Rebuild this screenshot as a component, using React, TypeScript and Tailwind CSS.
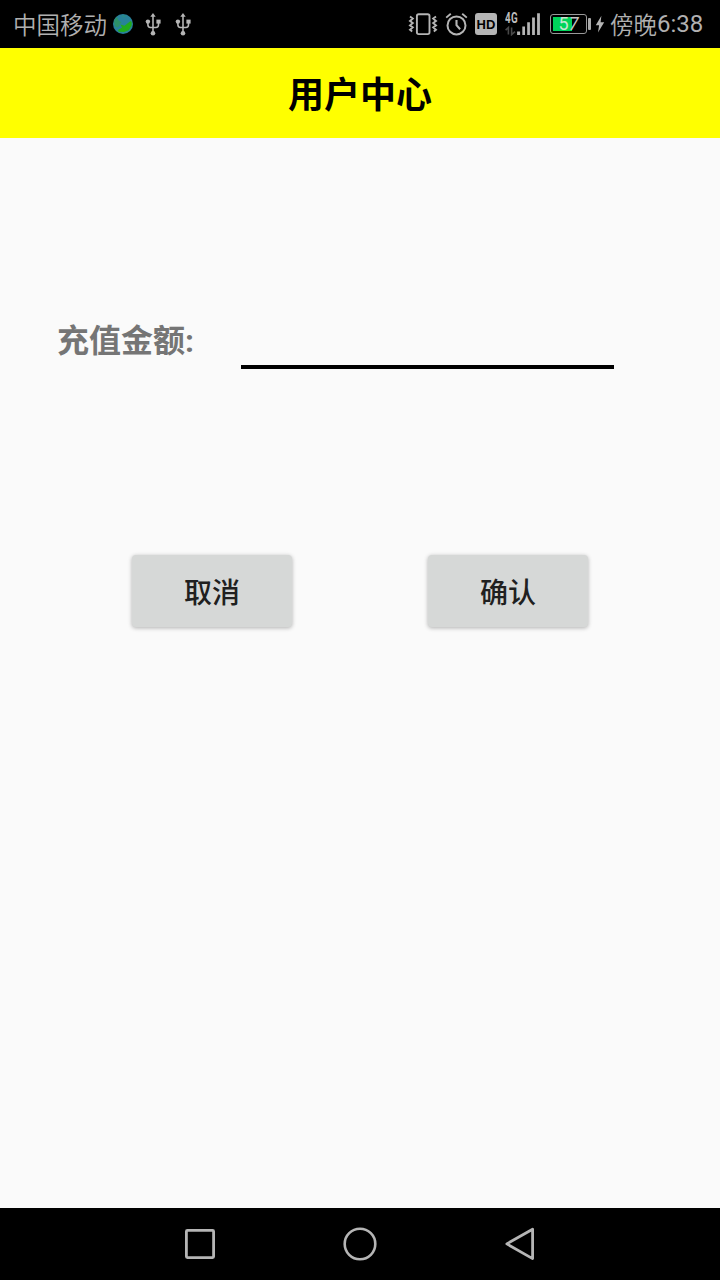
import type { ReactNode } from "react";

const statusFont = "font-['Roboto','Noto_Sans_CJK_SC',sans-serif]";

function Usb() {
  return (
    <svg className="block h-6 w-5 shrink-0" viewBox="0 0 20 24" fill="none" stroke="#b5b5b5" strokeWidth="1.6">
      <path d="M10 4v16M4.9 9.5v3.2c0 1.8 1 2.7 2.6 2.8H10M15.5 10v2.7c0 1.8-1 2.7-2.6 2.8H10" />
      <path d="M10 1L12.7 4.8H7.3z" fill="#b5b5b5" stroke="none" />
      <circle cx="4.9" cy="9.6" r="2.2" fill="#b5b5b5" stroke="none" />
      <rect x="13.4" y="7.6" width="4.2" height="4" fill="#b5b5b5" stroke="none" />
      <circle cx="10" cy="21.2" r="2.3" fill="#b5b5b5" stroke="none" />
    </svg>
  );
}

function Globe() {
  return (
    <svg className="ml-[5px] block h-6 w-[22px] shrink-0" viewBox="0 0 22 24">
      <circle cx="11" cy="12" r="10" fill="#28829a" />
      <path d="M3 7L5 5l1.5 3.2 3 2.4-1.6 1.3-.6 2.2-1.8 1.3L2.8 14.2 2 9z" fill="#2c9168" />
      <path d="M8.4 12.6l4.2 1.2 5.9-4.8 1.2 1-.1 3.7-2.9 4.6-4.6 1.6-5.4-.2-.7-1.8 4.1-2.4z" fill="#22ab1c" />
      <path d="M9.5 3.3l4.8.3-1.2 2-3-.4z" fill="#2b8a88" />
    </svg>
  );
}

function Vibrate() {
  return (
    <svg className="block h-6 w-[30px] shrink-0" viewBox="0 0 30 24" fill="none" stroke="#b5b5b5">
      <rect x="8.9" y="2.3" width="12.6" height="19.8" rx="1.8" strokeWidth="1.9" />
      <path d="M2 4.6l2.8 2-2.8 2.4 2.8 2L2 13.4l2.8 2L2 17.8l2.2 1.8M28 4.6l-2.8 2L28 9l-2.8 2 2.8 2.4-2.8 2 2.8 2.4-2.2 1.8" strokeWidth="1.9" />
    </svg>
  );
}

function Alarm() {
  return (
    <svg className="ml-[7px] block h-6 w-[23px] shrink-0" viewBox="0 0 23 24" fill="none" stroke="#b5b5b5">
      <circle cx="11.5" cy="13.4" r="9" strokeWidth="2" />
      <path d="M11.5 8v5.2l3.6 4" strokeWidth="2.1" />
      <path d="M1.2 5.6l4.6-3.9M21.8 5.6l-4.6-3.9" strokeWidth="1.9" />
    </svg>
  );
}

function HdBadge() {
  return (
    <span className="ml-[7px] flex h-[22px] w-[22px] items-center justify-center rounded-[3px] bg-[#b5b5b5] font-['Liberation_Sans',sans-serif] text-[13px] font-bold leading-none text-black">
      HD
    </span>
  );
}

function Signal() {
  return (
    <div className="relative ml-[8px] h-6 w-9 shrink-0">
      <svg className="block h-6 w-9" viewBox="0 0 36 24">
        <path d="M12.1 19.6h3v3.4h-3zM17.3 14.5h2.7V23h-2.7zM22.2 10.2h2.7V23h-2.7zM27.1 5.6h2.8V23h-2.8zM32.1 1.2h2.8V23h-2.8z" fill="#b5b5b5" />
        <path d="M.6 18.2l2.8-2.6v7M6.6 15.6v7l3.4-3" fill="none" stroke="#484848" strokeWidth="1.6" />
      </svg>
      <span className="absolute left-0 top-0 origin-left scale-x-[.7] text-[14px] font-bold leading-[12px] tracking-[.5px] text-[#bdbdbd]">4G</span>
    </div>
  );
}

function Battery() {
  return (
    <div className="ml-[9px] flex h-6 shrink-0 items-center">
      <div className="relative h-[20px] w-[37px] rounded-[3px] border border-[#999] p-[2px]">
        <div className="h-full w-[19px] bg-[#00d45a]" />
        <span className="absolute inset-0 flex items-center justify-center text-[18px] font-normal leading-none text-[#c8e6d2]">
          <span>5</span>
          <span className="italic text-[#c4c4c4]">7</span>
        </span>
      </div>
      <div className="ml-px h-[12px] w-[3px] rounded-[1px] bg-[#aaa]" />
      <svg className="ml-[4px] block h-[18px] w-[10px]" viewBox="0 0 10 18">
        <path d="M6.4 .8L.8 10.2h3.3L3 17.4 9.2 7.2H5.6z" fill="#b5b5b5" />
      </svg>
    </div>
  );
}

function StatusBar() {
  return (
    <header className={`flex h-12 shrink-0 items-center justify-between bg-black pl-[13px] pr-4 text-[23.5px] font-[350] leading-6 text-[#b0b0b0] ${statusFont}`}>
      <div className="flex items-center">
        <span className="w-[94px] whitespace-nowrap pt-[3px]">中国移动</span>
        <Globe />
        <div className="ml-[9px] flex gap-[10px]">
          <Usb />
          <Usb />
        </div>
      </div>
      <div className="flex items-center">
        <Vibrate />
        <Alarm />
        <HdBadge />
        <Signal />
        <Battery />
        <span className="ml-[5px] flex w-[94px] whitespace-nowrap">
          <span className="pt-[3px]">傍晚</span>
          <span className="pt-px text-[24px] font-normal">6:38</span>
        </span>
      </div>
    </header>
  );
}

function ActionButton({ children }: { children: ReactNode }) {
  return (
    <button className="h-[72px] w-40 rounded-[4px] bg-[#d6d8d7] pt-1.5 text-[28px] font-medium leading-9 text-[#202020] shadow-[0_1px_4px_rgba(0,0,0,0.3)]">
      {children}
    </button>
  );
}

function NavigationBar() {
  return (
    <nav className="flex h-[72px] shrink-0 items-center justify-center gap-[120px] bg-black">
      <svg className="h-10 w-10" viewBox="0 0 40 40" fill="none" stroke="#b5b5b5" strokeWidth="2.8">
        <rect x="6.4" y="6.4" width="27.2" height="27.2" rx="1" />
      </svg>
      <svg className="h-10 w-10" viewBox="0 0 40 40" fill="none" stroke="#b5b5b5" strokeWidth="2.6">
        <circle cx="20" cy="20" r="15.3" />
      </svg>
      <svg className="h-10 w-10" viewBox="0 0 40 40" fill="none" stroke="#b5b5b5" strokeWidth="2.8" strokeLinejoin="round">
        <path d="M32.6 5.2v29.4L6.8 19.9z" />
      </svg>
    </nav>
  );
}

export default function App() {
  return (
    <div className="flex h-[1280px] w-[720px] flex-col overflow-hidden bg-[#fafafa] font-['Roboto','Noto_Sans_CJK_SC',sans-serif]">
      <StatusBar />
      <h1 className="flex h-[90px] shrink-0 items-center justify-center bg-[#ffff00] pt-[6px] text-[36px] font-bold leading-[42px] text-black">用户中心</h1>
      <main className="flex-1">
        <div className="flex h-[231px] items-end pl-[57px]">
          <label htmlFor="amount" className="mb-[9px] w-[184px] whitespace-nowrap text-[32px] font-bold leading-[38px] text-[#757575]">充值金额:</label>
          <input id="amount" className="h-14 w-[373px] border-b-4 border-black bg-transparent text-[32px] outline-none" />
        </div>
        <div className="flex justify-center gap-[136px] pt-[186px]">
          <ActionButton>取消</ActionButton>
          <ActionButton>确认</ActionButton>
        </div>
      </main>
      <NavigationBar />
    </div>
  );
}
